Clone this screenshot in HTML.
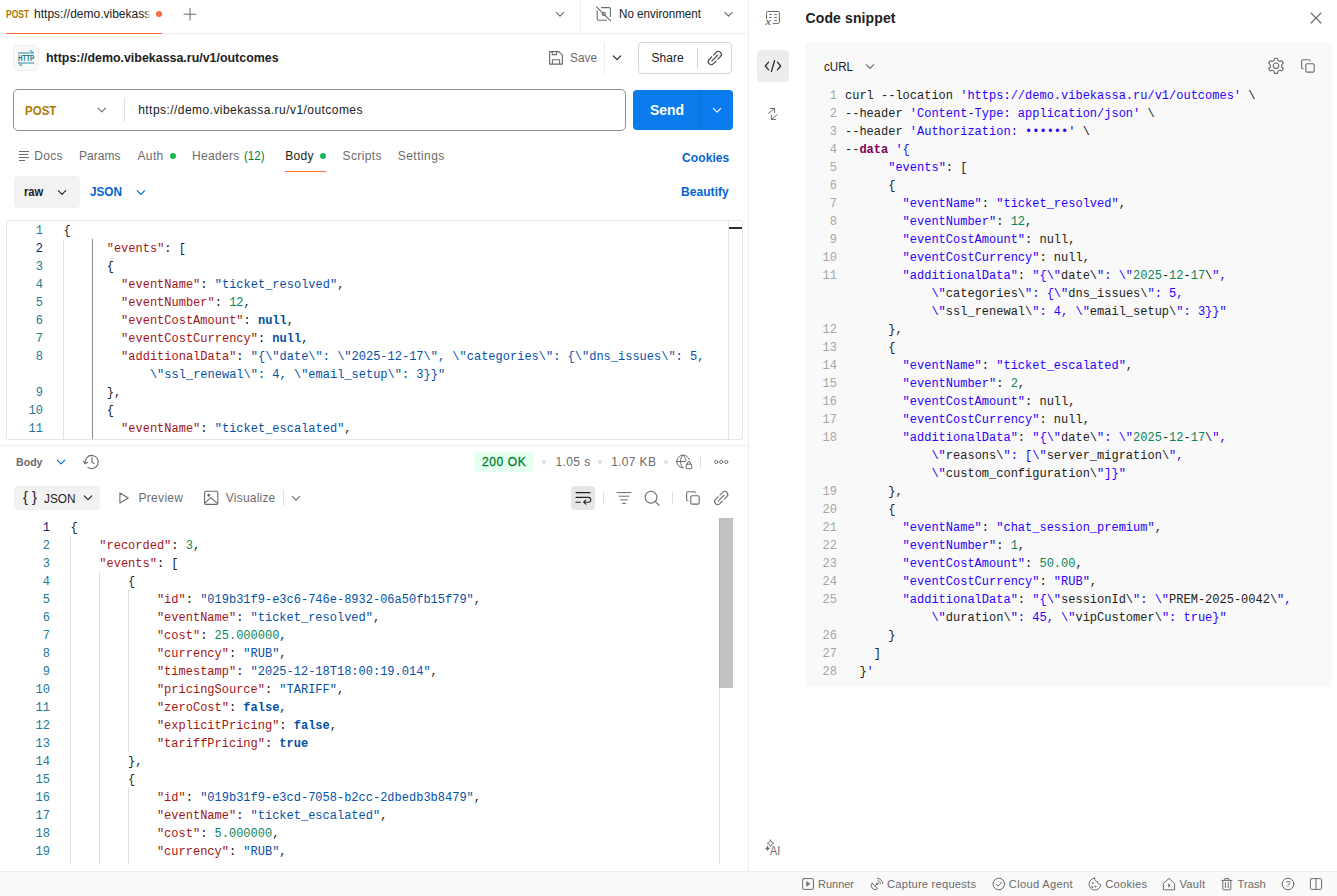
<!DOCTYPE html>
<html lang="en"><head><meta charset="utf-8"><title>Postman - Code snippet</title>
<style>
html,body{margin:0;padding:0}
body{width:1337px;height:896px;position:relative;overflow:hidden;background:#fff;font-family:"Liberation Sans",sans-serif;color:#212121}
.t{position:absolute;line-height:16px;white-space:pre;transform-origin:0 50%}
.x{position:absolute}
.code{position:absolute;left:0;font:12px/18px "Liberation Mono",monospace;color:#212121}
.ln{height:18px;position:relative}
.no,.tx{position:absolute;top:0;white-space:pre}
.no{text-align:right;left:0}
.req{top:222px}.req .no{width:43px;color:#237893}.req .tx{left:63.5px}
.resp{top:519px}.resp .no{width:50px;color:#237893}.resp .tx{left:70.5px}
.req .no.a,.resp .no.a{color:#0b216f}
.snip{top:87px}.snip .no{width:837px;color:#a6a6a6}.snip .tx{left:845px}
.k{color:#a31515}.s{color:#0451a5}.n{color:#098658}.w{color:#0451a5;font-weight:700}
.b{color:#2a00ff}.g{color:#098658}.d{color:#7f0055;font-weight:700}
svg{position:absolute;left:0;top:0;overflow:visible}
.st{fill:none;stroke-linecap:round;stroke-linejoin:round}
</style></head><body>
<div class="x" style="left:0px;top:33px;width:748px;height:1px;background:#ededed;"></div>
<div class="x" style="left:6px;top:32.5px;width:156px;height:1.6px;background:#ff6c37;"></div>
<div class="x" style="left:580px;top:0px;width:1px;height:33px;background:#ededed;"></div>
<div class="x" style="left:748px;top:0px;width:1px;height:872px;background:#ededed;"></div>
<div class="x" style="left:0px;top:445px;width:748px;height:1px;background:#ededed;"></div>
<div class="x" style="left:0px;top:871px;width:1337px;height:25px;background:#f9f9f9;border-top:1px solid #ededed;box-sizing:border-box;"></div>
<div class="x" style="left:145px;top:4px;width:7px;height:22px;background:linear-gradient(90deg,rgba(255,255,255,0),#fff 85%);z-index:2"></div>
<div class="x" style="left:155.9px;top:11.2px;width:6px;height:6px;background:#ff6c37;border-radius:3px;"></div>
<div class="x" style="left:13px;top:45px;width:26px;height:26px;background:#f9f9f9;border:1px solid #ededed;box-sizing:border-box;border-radius:5px;"></div>
<div class="x" style="left:604px;top:42px;width:1px;height:32px;background:#ededed;"></div>
<div class="x" style="left:638px;top:42px;width:94px;height:32px;border:1px solid #d4d4d4;box-sizing:border-box;border-radius:4px;"></div>
<div class="x" style="left:697px;top:48px;width:1px;height:20px;background:#d4d4d4;"></div>
<div class="x" style="left:13px;top:89px;width:613px;height:42px;background:#fff;border:1px solid #8f8f8f;box-sizing:border-box;border-radius:5px;"></div>
<div class="x" style="left:124px;top:98px;width:1px;height:24px;background:#e0e0e0;"></div>
<div class="x" style="left:633px;top:90px;width:100px;height:40px;background:#097bed;border-radius:4px;"></div>
<div class="x" style="left:700px;top:90px;width:1px;height:40px;background:#0970d8;"></div>
<div class="x" style="left:285.3px;top:170.6px;width:40.7px;height:1.5px;background:#ff6c37;"></div>
<div class="x" style="left:169.8px;top:153px;width:6px;height:6px;background:#1cb854;border-radius:3px;"></div>
<div class="x" style="left:320px;top:153px;width:6px;height:6px;background:#1cb854;border-radius:3px;"></div>
<div class="x" style="left:14px;top:176px;width:66px;height:32px;background:#f2f2f2;border-radius:4px;"></div>
<div class="x" style="left:6px;top:220px;width:736.5px;height:220px;border:1px solid #e6e6e6;box-sizing:border-box;border-radius:3px;"></div>
<div class="x" style="left:728px;top:221px;width:1px;height:218px;background:#e6e6e6;"></div>
<div class="x" style="left:729px;top:226.5px;width:13px;height:2.5px;background:#303030;"></div>
<div class="x" style="left:63px;top:239px;width:1px;height:200px;background:#e3e3e3;"></div>
<div class="x" style="left:92px;top:239px;width:1px;height:200px;background:#8a8a8a;"></div>
<div class="x" style="left:474px;top:452px;width:60px;height:20px;background:#e5fff1;border-radius:4px;"></div>
<div class="x" style="left:542px;top:460px;width:4px;height:4px;background:#dfdfdf;border-radius:2px;"></div>
<div class="x" style="left:598.3px;top:460px;width:4px;height:4px;background:#dfdfdf;border-radius:2px;"></div>
<div class="x" style="left:664px;top:460px;width:4px;height:4px;background:#dfdfdf;border-radius:2px;"></div>
<div class="x" style="left:700px;top:456px;width:1px;height:12px;background:#e0e0e0;"></div>
<div class="x" style="left:14px;top:486px;width:86px;height:24px;background:#f2f2f2;border-radius:4px;"></div>
<div class="x" style="left:283px;top:490px;width:1px;height:16px;background:#e0e0e0;"></div>
<div class="x" style="left:571px;top:486px;width:24px;height:24px;background:#e6e6e6;border-radius:4px;"></div>
<div class="x" style="left:603px;top:492px;width:1px;height:12px;background:#e0e0e0;"></div>
<div class="x" style="left:672px;top:492px;width:1px;height:12px;background:#e0e0e0;"></div>
<div class="x" style="left:70px;top:536px;width:1px;height:328px;background:#dcdcdc;"></div>
<div class="x" style="left:99px;top:572px;width:1px;height:292px;background:#dcdcdc;"></div>
<div class="x" style="left:128px;top:590px;width:1px;height:162px;background:#dcdcdc;"></div>
<div class="x" style="left:128px;top:788px;width:1px;height:76px;background:#dcdcdc;"></div>
<div class="x" style="left:719px;top:518px;width:1px;height:346px;background:#dedede;"></div>
<div class="x" style="left:719px;top:518px;width:1px;height:170px;background:#b2b2b2;"></div>
<div class="x" style="left:720px;top:518px;width:13px;height:170px;background:#c1c1c1;"></div>
<div class="x" style="left:757px;top:50px;width:32px;height:32px;background:#ededed;border-radius:4px;"></div>
<div class="x" style="left:805px;top:42px;width:527px;height:645px;background:#f9f9f9;border-radius:4px;"></div>
<svg width="1337" height="896" viewBox="0 0 1337 896">
<g transform="translate(190 14.2)" stroke="#6b6b6b" stroke-width="1.0" class="st" ><path d="M-6 0H6M0 -6V6"/></g>
<g class="st" stroke="#6db3bf" stroke-width="1.7" style="stroke-linecap:butt"><path d="M18 53H34M30.2 50.2L33.6 53.2"/><path d="M18 63H34M18.4 62.8L21.8 65.8"/></g>
<text x="17.9" y="60.9" font-family="Liberation Sans, sans-serif" font-weight="700" font-size="9" fill="#0f7d8c" textLength="16.4" lengthAdjust="spacingAndGlyphs">HTTP</text>
<g transform="translate(560 14.2)" stroke="#6b6b6b" stroke-width="1.1" class="st" ><path d="M-3.7 -1.9L0 1.9L3.7 -1.9"/></g>
<g transform="translate(728.5 14.2)" stroke="#6b6b6b" stroke-width="1.1" class="st" ><path d="M-3.7 -1.9L0 1.9L3.7 -1.9"/></g>
<g transform="translate(617 57.8)" stroke="#212121" stroke-width="1.1" class="st" ><path d="M-3.7 -1.9L0 1.9L3.7 -1.9"/></g>
<g transform="translate(101.8 110)" stroke="#6b6b6b" stroke-width="1.1" class="st" ><path d="M-3.7 -1.9L0 1.9L3.7 -1.9"/></g>
<g transform="translate(717 110.2)" stroke="#fff" stroke-width="1.1" class="st" ><path d="M-3.7 -1.9L0 1.9L3.7 -1.9"/></g>
<g transform="translate(62 192.5)" stroke="#212121" stroke-width="1.1" class="st" ><path d="M-3.7 -1.9L0 1.9L3.7 -1.9"/></g>
<g transform="translate(140.9 192.5)" stroke="#0265d2" stroke-width="1.1" class="st" ><path d="M-3.7 -1.9L0 1.9L3.7 -1.9"/></g>
<g transform="translate(61 462)" stroke="#0265d2" stroke-width="1.1" class="st" ><path d="M-3.7 -1.9L0 1.9L3.7 -1.9"/></g>
<g transform="translate(88 497.8)" stroke="#212121" stroke-width="1.1" class="st" ><path d="M-3.7 -1.9L0 1.9L3.7 -1.9"/></g>
<g transform="translate(296 498.2)" stroke="#6b6b6b" stroke-width="1.1" class="st" ><path d="M-3.7 -1.9L0 1.9L3.7 -1.9"/></g>
<g transform="translate(870 66.5)" stroke="#6b6b6b" stroke-width="1.1" class="st" ><path d="M-3.7 -1.9L0 1.9L3.7 -1.9"/></g>
<g transform="translate(0 0)" stroke="#6b6b6b" stroke-width="1.1" class="st" ><path d="M601.5 7.6H609.2Q610.4 7.6 610.4 8.8V16.5M606.5 20.2H598.4Q597.2 20.2 597.2 19V10.8"/><circle cx="603.8" cy="13.9" r="1.6"/><path d="M596.6 6.8L610.6 20.8"/></g>
<g transform="translate(0 0)" stroke="#6b6b6b" stroke-width="1.1" class="st" ><path d="M549.6 51.6H558.8L562.4 55.2V64.1H549.6Z"/><path d="M552.2 51.8V54.6H556.6V51.8"/><path d="M552.4 64V59.8H559.6V64"/></g>
<g transform="translate(714.8 58)" stroke="#3a3a3a" stroke-width="1.1" class="st" ><g transform="rotate(-45)"><path d="M1.3 -3H5A3 3 0 0 1 5 3H1.3M-1.3 -3H-5A3 3 0 0 0 -5 3H-1.3M-4.1 0H4.1"/></g></g>
<g transform="translate(721.2 498)" stroke="#6b6b6b" stroke-width="1.1" class="st" ><g transform="rotate(-45)"><path d="M1.3 -3H5A3 3 0 0 1 5 3H1.3M-1.3 -3H-5A3 3 0 0 0 -5 3H-1.3M-4.1 0H4.1"/></g></g>
<path d="M19 151.5H29M19 154.5H28M19 157.5H29M19 160.5H25" stroke="#6b6b6b" stroke-width="1" fill="none"/>
<g transform="translate(0 0)" stroke="#6b6b6b" stroke-width="1.1" class="st" ><path d="M85.2 463.1A6.6 6.6 0 1 1 87.9 467.4"/><path d="M83.4 461.2L85 463.7L87.7 462.3"/><path d="M91.9 457.4V462L94.2 463.6"/></g>
<g transform="translate(0 0)" stroke="#6b6b6b" stroke-width="1.1" class="st" ><path d="M119.9 493V503L128.2 498Z"/></g>
<g transform="translate(0 0)" stroke="#6b6b6b" stroke-width="1.1" class="st" ><rect x="204.6" y="491.2" width="13.2" height="13.2" rx="1.4"/><circle cx="208.8" cy="495.3" r="0.9" fill="#6b6b6b"/><path d="M204.8 503.2L210.8 497.6L217.6 503.6"/></g>
<g transform="translate(0 0)" stroke="#6b6b6b" stroke-width="1.0" class="st" ><path d="M689.3 459.6A6.4 6.4 0 1 0 683 467.9"/><path d="M683 455.1C679.6 458.4 679.6 464.6 683 467.9M683 455.1C685 457 685.9 459 686.1 461M676.8 461.5H685"/><rect x="686.2" y="464.2" width="5.6" height="4.6" rx="0.8" fill="#fff"/><path d="M687.6 464V462.9A1.4 1.4 0 0 1 690.4 462.9V464"/></g>
<g transform="translate(0 0)" stroke="#6b6b6b" stroke-width="0.9" class="st" ><circle cx="716.2" cy="462" r="1.6"/><circle cx="721.2" cy="462" r="1.6"/><circle cx="726.2" cy="462" r="1.6"/></g>
<g transform="translate(0 0)" stroke="#212121" stroke-width="1.1" class="st" ><path d="M576 492.6H590M576 497.4H588.4A2.4 2.4 0 0 1 588.4 502.2H584M585.8 500.2L583.6 502.2L585.8 504.2M576 502.2H580.4"/></g>
<g transform="translate(0 0)" stroke="#6b6b6b" stroke-width="1.0" class="st" ><path d="M617 492.6H631M619.2 496.2H628.8M620.8 499.8H627.2M622.4 503.4H625.6"/></g>
<g transform="translate(0 0)" stroke="#6b6b6b" stroke-width="1.1" class="st" ><circle cx="651" cy="497.2" r="5.9"/><path d="M655.4 501.6L659.2 505.4"/></g>
<g transform="translate(693 498)" stroke="#6b6b6b" stroke-width="1.1" class="st" ><rect x="-2.2" y="-2.3" width="8.4" height="8.4" rx="1.4"/><path d="M-5 2.6Q-6.4 2.6 -6.4 1.2V-4.8Q-6.4 -6.2 -5 -6.2H0.9Q2.3 -6.2 2.3 -5.2"/></g>
<g transform="translate(1308 66)" stroke="#6b6b6b" stroke-width="1.1" class="st" ><rect x="-2.2" y="-2.3" width="8.4" height="8.4" rx="1.4"/><path d="M-5 2.6Q-6.4 2.6 -6.4 1.2V-4.8Q-6.4 -6.2 -5 -6.2H0.9Q2.3 -6.2 2.3 -5.2"/></g>
<g transform="translate(0 0)" stroke="#6b6b6b" stroke-width="1.0" class="st" ><path d="M766.5 18.6V12.7Q766.5 11.5 767.7 11.5H778.2Q779.4 11.5 779.4 12.7V22.2Q779.4 23.4 778.2 23.4H773.2"/><path d="M769.2 14.5H771.7M774.2 14.5H776.9M769.2 17.5H771.7M774.2 17.5H776.9M774.2 20.5H776.9" style="stroke-linecap:butt"/></g>
<text x="765.6" y="25" font-family="Liberation Serif, serif" font-style="italic" font-weight="700" font-size="11" fill="#6b6b6b">x</text>
<g transform="translate(773 66)" stroke="#212121" stroke-width="1.2" class="st" ><path d="M-4.4 -3.8L-7.7 0L-4.4 3.8M4.4 -3.8L7.7 0L4.4 3.8M1.6 -5.5L-1.6 5.5"/></g>
<g transform="translate(0 0)" stroke="#6b6b6b" stroke-width="1.0" class="st" ><path d="M768.6 113.4L774.4 108.6M770.2 108.5H774.6V112.6M777.2 114.6L771.6 119.3M771.4 115.4V119.4H775.8"/></g>
<g transform="translate(770.5 843.4)" stroke="#6b6b6b" stroke-width="0.9" class="st" ><path d="M0 -3.3Q0.5 -0.5 3.3 0Q0.5 0.5 0 3.3Q-0.5 0.5 -3.3 0Q-0.5 -0.5 0 -3.3Z"/></g>
<g transform="translate(767.5 848.4)" stroke="#6b6b6b" stroke-width="0.5" class="st" ><path d="M0 -2.2Q0.3 -0.3 2.2 0Q0.3 0.3 0 2.2Q-0.3 0.3 -2.2 0Q-0.3 -0.3 0 -2.2Z" fill="#6b6b6b"/></g>
<g transform="translate(1316 18)" stroke="#6b6b6b" stroke-width="1.1" class="st" ><path d="M-5 -5L5 5M5 -5L-5 5"/></g>
<g transform="translate(1276 65.8)" stroke="#6b6b6b" stroke-width="1.1" class="st" ><path d="M-1.53 -7.55L1.53 -7.55L2.01 -5.33L3.62 -4.41L5.77 -5.10L7.30 -2.45L5.62 -0.93L5.62 0.93L7.30 2.45L5.77 5.10L3.62 4.41L2.01 5.33L1.53 7.55L-1.53 7.55L-2.01 5.33L-3.62 4.41L-5.77 5.10L-7.30 2.45L-5.62 0.93L-5.62 -0.93L-7.30 -2.45L-5.77 -5.10L-3.62 -4.41L-2.01 -5.33Z"/><circle r="2.8"/></g>
<g transform="translate(0 0)" stroke="#6b6b6b" stroke-width="1.0" class="st" ><rect x="802.6" y="878.6" width="10.8" height="10.8" rx="1.4"/><path d="M806.6 881.8V886.2L809.8 884Z" fill="#6b6b6b" stroke-width="0.6"/></g>
<g transform="translate(0 0)" stroke="#6b6b6b" stroke-width="1.0" class="st" ><path d="M872.1 883.2L877.8 888.5A3.9 3.9 0 0 1 872.1 883.2Z"/><path d="M875 885.9L877 883.9"/><circle cx="877.1" cy="883.8" r="0.7" fill="#6b6b6b"/><path d="M878 880.7A3.3 3.3 0 0 1 880.5 883.5M877.4 878.3A5.6 5.6 0 0 1 882.8 883.5"/></g>
<g transform="translate(0 0)" stroke="#6b6b6b" stroke-width="1.0" class="st" ><circle cx="998.8" cy="884" r="5.8"/><path d="M996.2 884.2L998.2 886.2L1001.6 882.2"/></g>
<g transform="translate(0 0)" stroke="#6b6b6b" stroke-width="1.0" class="st" ><path d="M1094.6 878.2A5.9 5.9 0 1 0 1100.8 884.6A2.6 2.6 0 0 1 1097.8 881.6A2.8 2.8 0 0 1 1094.6 878.2Z"/><circle cx="1092.6" cy="883" r="0.5"/><circle cx="1095.4" cy="886.6" r="0.5"/><circle cx="1092.2" cy="887" r="0.5"/></g>
<g transform="translate(0 0)" stroke="#6b6b6b" stroke-width="1.0" class="st" ><path d="M1163.4 889.4V883.4L1169 878.4L1174.6 883.4V889.4Z"/><path d="M1169 884.4V886.6" stroke-width="1.6"/></g>
<g transform="translate(0 0)" stroke="#6b6b6b" stroke-width="1.0" class="st" ><path d="M1221.6 880.4H1232M1224.8 880.2V878.6H1228.8V880.2M1222.8 880.6V889Q1222.8 889.8 1223.6 889.8H1230Q1230.8 889.8 1230.8 889V880.6M1225.4 882.6V887.6M1228.2 882.6V887.6"/></g>
<g transform="translate(0 0)" stroke="#6b6b6b" stroke-width="1.0" class="st" ><circle cx="1288" cy="884" r="5.8"/></g>
<text x="1285.4" y="887.4" font-family="Liberation Sans, sans-serif" font-size="9" fill="#6b6b6b">?</text>
<g transform="translate(0 0)" stroke="#6b6b6b" stroke-width="1.0" class="st" ><rect x="1310.4" y="878.6" width="11.2" height="10.8" rx="1.2"/><path d="M1316 878.8V889.2"/></g>
</svg>
<span class="t" id="t0" style="left:6.0px;top:6.3px;font-size:10.5px;color:#ad7a03;font-weight:700;transform:scaleX(0.8114);">POST</span>
<span class="t" id="t1" style="left:34.1px;top:6.3px;font-size:12px;color:#212121;letter-spacing:0.002px;">https://demo.vibekass</span>
<span class="t" id="t2" style="left:619.3px;top:6.3px;font-size:12px;color:#212121;transform:scaleX(0.9679);">No environment</span>
<span class="t" id="t3" style="left:46.4px;top:49.7px;font-size:12.5px;color:#212121;font-weight:700;transform:scaleX(0.9936);">https://demo.vibekassa.ru/v1/outcomes</span>
<span class="t" id="t4" style="left:569.8px;top:50.1px;font-size:12px;color:#6b6b6b;transform:scaleX(0.9905);">Save</span>
<span class="t" id="t5" style="left:651.5px;top:50.1px;font-size:12px;color:#212121;letter-spacing:0.042px;">Share</span>
<span class="t" id="t6" style="left:25.1px;top:102.9px;font-size:12px;color:#ad7a03;font-weight:700;transform:scaleX(0.9611);">POST</span>
<span class="t" id="t7" style="left:138.2px;top:101.9px;font-size:12px;color:#212121;letter-spacing:0.450px;">https://demo.vibekassa.ru/v1/outcomes</span>
<span class="t" id="t8" style="left:649.6px;top:102.0px;font-size:14px;color:#ffffff;font-weight:700;transform:scaleX(0.9961);">Send</span>
<span class="t" id="t9" style="left:34.2px;top:147.9px;font-size:12px;color:#6b6b6b;letter-spacing:0.319px;">Docs</span>
<span class="t" id="t10" style="left:79.0px;top:147.9px;font-size:12px;color:#6b6b6b;letter-spacing:0.051px;">Params</span>
<span class="t" id="t11" style="left:137.4px;top:147.9px;font-size:12px;color:#6b6b6b;letter-spacing:0.404px;">Auth</span>
<span class="t" id="t12" style="left:192.1px;top:147.9px;font-size:12px;color:#6b6b6b;letter-spacing:0.307px;">Headers</span>
<span class="t" id="t13" style="left:244.3px;top:147.9px;font-size:12px;color:#007f31;transform:scaleX(0.9605);">(12)</span>
<span class="t" id="t14" style="left:285.3px;top:147.9px;font-size:12px;color:#212121;letter-spacing:0.247px;">Body</span>
<span class="t" id="t15" style="left:342.5px;top:147.9px;font-size:12px;color:#6b6b6b;letter-spacing:0.385px;">Scripts</span>
<span class="t" id="t16" style="left:397.8px;top:147.9px;font-size:12px;color:#6b6b6b;letter-spacing:0.449px;">Settings</span>
<span class="t" id="t17" style="left:682.1px;top:149.6px;font-size:12px;color:#0265d2;font-weight:700;letter-spacing:0.085px;">Cookies</span>
<span class="t" id="t18" style="left:23.9px;top:184.1px;font-size:12px;color:#212121;font-weight:700;transform:scaleX(0.9329);">raw</span>
<span class="t" id="t19" style="left:90.0px;top:184.1px;font-size:12px;color:#0265d2;font-weight:700;transform:scaleX(0.9790);">JSON</span>
<span class="t" id="t20" style="left:681.0px;top:183.6px;font-size:12px;color:#0265d2;font-weight:700;letter-spacing:0.065px;">Beautify</span>
<span class="t" id="t21" style="left:16.2px;top:454.1px;font-size:11.2px;color:#6b6b6b;font-weight:700;transform:scaleX(0.9475);">Body</span>
<span class="t" id="t22" style="left:482.1px;top:454.1px;font-size:12px;color:#007f31;letter-spacing:0.579px;-webkit-text-stroke:0.3px #007f31;">200 OK</span>
<span class="t" id="t23" style="left:555.4px;top:454.1px;font-size:12px;color:#6b6b6b;letter-spacing:0.419px;">1.05 s</span>
<span class="t" id="t24" style="left:611.2px;top:454.1px;font-size:12px;color:#6b6b6b;letter-spacing:0.333px;">1.07 KB</span>
<span class="t" id="t25" style="left:23.2px;top:489.2px;font-size:15px;color:#212121;transform:scaleX(0.9868);">{ }</span>
<span class="t" id="t26" style="left:44.4px;top:491.0px;font-size:12px;color:#212121;transform:scaleX(0.9839);">JSON</span>
<span class="t" id="t27" style="left:138.5px;top:490.1px;font-size:12px;color:#6b6b6b;letter-spacing:0.302px;">Preview</span>
<span class="t" id="t28" style="left:225.8px;top:490.1px;font-size:12px;color:#6b6b6b;letter-spacing:0.211px;">Visualize</span>
<span class="t" id="t29" style="left:805.5px;top:10.2px;font-size:14px;color:#212121;font-weight:700;letter-spacing:0.121px;">Code snippet</span>
<span class="t" id="t30" style="left:824.3px;top:59.1px;font-size:12px;color:#212121;transform:scaleX(0.9695);">cURL</span>
<span class="t" id="t31" style="left:769.9px;top:842.6px;font-size:12px;color:#6b6b6b;transform:scaleX(0.8992);">AI</span>
<span class="t" id="t32" style="left:818.3px;top:876.1px;font-size:11.2px;color:#6b6b6b;transform:scaleX(0.9808);">Runner</span>
<span class="t" id="t33" style="left:887.0px;top:876.1px;font-size:11.2px;color:#6b6b6b;letter-spacing:0.211px;">Capture requests</span>
<span class="t" id="t34" style="left:1008.8px;top:876.1px;font-size:11.2px;color:#6b6b6b;letter-spacing:0.293px;">Cloud Agent</span>
<span class="t" id="t35" style="left:1105.2px;top:876.1px;font-size:11.2px;color:#6b6b6b;letter-spacing:0.230px;">Cookies</span>
<span class="t" id="t36" style="left:1179.5px;top:876.1px;font-size:11.2px;color:#6b6b6b;letter-spacing:0.207px;">Vault</span>
<span class="t" id="t37" style="left:1237.5px;top:876.1px;font-size:11.2px;color:#6b6b6b;letter-spacing:0.028px;">Trash</span><div class="code req">
<div class="ln"><span class="no">1</span><span class="tx">{</span></div>
<div class="ln"><span class="no a">2</span><span class="tx">      <span class="k">"events"</span>: [</span></div>
<div class="ln"><span class="no">3</span><span class="tx">      {</span></div>
<div class="ln"><span class="no">4</span><span class="tx">        <span class="k">"eventName"</span>: <span class="s">"ticket_resolved"</span>,</span></div>
<div class="ln"><span class="no">5</span><span class="tx">        <span class="k">"eventNumber"</span>: <span class="n">12</span>,</span></div>
<div class="ln"><span class="no">6</span><span class="tx">        <span class="k">"eventCostAmount"</span>: <span class="w">null</span>,</span></div>
<div class="ln"><span class="no">7</span><span class="tx">        <span class="k">"eventCostCurrency"</span>: <span class="w">null</span>,</span></div>
<div class="ln"><span class="no">8</span><span class="tx">        <span class="k">"additionalData"</span>: <span class="s">"{\"date\": \"2025-12-17\", \"categories\": {\"dns_issues\": 5,</span></span></div>
<div class="ln"><span class="no"></span><span class="tx">            <span class="s">\"ssl_renewal\": 4, \"email_setup\": 3}}"</span></span></div>
<div class="ln"><span class="no">9</span><span class="tx">      },</span></div>
<div class="ln"><span class="no">10</span><span class="tx">      {</span></div>
<div class="ln"><span class="no">11</span><span class="tx">        <span class="k">"eventName"</span>: <span class="s">"ticket_escalated"</span>,</span></div>
</div><div class="code resp">
<div class="ln"><span class="no a">1</span><span class="tx">{</span></div>
<div class="ln"><span class="no">2</span><span class="tx">    <span class="k">"recorded"</span>: <span class="n">3</span>,</span></div>
<div class="ln"><span class="no">3</span><span class="tx">    <span class="k">"events"</span>: [</span></div>
<div class="ln"><span class="no">4</span><span class="tx">        {</span></div>
<div class="ln"><span class="no">5</span><span class="tx">            <span class="k">"id"</span>: <span class="s">"019b31f9-e3c6-746e-8932-06a50fb15f79"</span>,</span></div>
<div class="ln"><span class="no">6</span><span class="tx">            <span class="k">"eventName"</span>: <span class="s">"ticket_resolved"</span>,</span></div>
<div class="ln"><span class="no">7</span><span class="tx">            <span class="k">"cost"</span>: <span class="n">25.000000</span>,</span></div>
<div class="ln"><span class="no">8</span><span class="tx">            <span class="k">"currency"</span>: <span class="s">"RUB"</span>,</span></div>
<div class="ln"><span class="no">9</span><span class="tx">            <span class="k">"timestamp"</span>: <span class="s">"2025-12-18T18:00:19.014"</span>,</span></div>
<div class="ln"><span class="no">10</span><span class="tx">            <span class="k">"pricingSource"</span>: <span class="s">"TARIFF"</span>,</span></div>
<div class="ln"><span class="no">11</span><span class="tx">            <span class="k">"zeroCost"</span>: <span class="w">false</span>,</span></div>
<div class="ln"><span class="no">12</span><span class="tx">            <span class="k">"explicitPricing"</span>: <span class="w">false</span>,</span></div>
<div class="ln"><span class="no">13</span><span class="tx">            <span class="k">"tariffPricing"</span>: <span class="w">true</span></span></div>
<div class="ln"><span class="no">14</span><span class="tx">        },</span></div>
<div class="ln"><span class="no">15</span><span class="tx">        {</span></div>
<div class="ln"><span class="no">16</span><span class="tx">            <span class="k">"id"</span>: <span class="s">"019b31f9-e3cd-7058-b2cc-2dbedb3b8479"</span>,</span></div>
<div class="ln"><span class="no">17</span><span class="tx">            <span class="k">"eventName"</span>: <span class="s">"ticket_escalated"</span>,</span></div>
<div class="ln"><span class="no">18</span><span class="tx">            <span class="k">"cost"</span>: <span class="n">5.000000</span>,</span></div>
<div class="ln"><span class="no">19</span><span class="tx">            <span class="k">"currency"</span>: <span class="s">"RUB"</span>,</span></div>
</div><div class="code snip">
<div class="ln"><span class="no">1</span><span class="tx">curl --location <span class="b">'https://demo.vibekassa.ru/v1/outcomes'</span> \</span></div>
<div class="ln"><span class="no">2</span><span class="tx">--header <span class="b">'Content-Type: application/json'</span> \</span></div>
<div class="ln"><span class="no">3</span><span class="tx">--header <span class="b">'Authorization: ••••••'</span> \</span></div>
<div class="ln"><span class="no">4</span><span class="tx">--<span class="d">data</span> <span class="b">'{</span></span></div>
<div class="ln"><span class="no">5</span><span class="tx">      <span class="b">"events"</span>: [</span></div>
<div class="ln"><span class="no">6</span><span class="tx">      {</span></div>
<div class="ln"><span class="no">7</span><span class="tx">        <span class="b">"eventName"</span>: <span class="b">"ticket_resolved"</span>,</span></div>
<div class="ln"><span class="no">8</span><span class="tx">        <span class="b">"eventNumber"</span>: <span class="g">12</span>,</span></div>
<div class="ln"><span class="no">9</span><span class="tx">        <span class="b">"eventCostAmount"</span>: null,</span></div>
<div class="ln"><span class="no">10</span><span class="tx">        <span class="b">"eventCostCurrency"</span>: null,</span></div>
<div class="ln"><span class="no">11</span><span class="tx">        <span class="b">"additionalData"</span>: <span class="b">"{\"</span>date\<span class="b">": \"</span><span class="g">2025</span>-<span class="g">12</span>-<span class="g">17</span>\<span class="b">",</span></span></div>
<div class="ln"><span class="no"></span><span class="tx">            <span class="b">\"</span>categories\<span class="b">": {\"</span>dns_issues\<span class="b">": 5,</span></span></div>
<div class="ln"><span class="no"></span><span class="tx">            <span class="b">\"</span>ssl_renewal\<span class="b">": 4, \"</span>email_setup\<span class="b">": 3}}"</span></span></div>
<div class="ln"><span class="no">12</span><span class="tx">      },</span></div>
<div class="ln"><span class="no">13</span><span class="tx">      {</span></div>
<div class="ln"><span class="no">14</span><span class="tx">        <span class="b">"eventName"</span>: <span class="b">"ticket_escalated"</span>,</span></div>
<div class="ln"><span class="no">15</span><span class="tx">        <span class="b">"eventNumber"</span>: <span class="g">2</span>,</span></div>
<div class="ln"><span class="no">16</span><span class="tx">        <span class="b">"eventCostAmount"</span>: null,</span></div>
<div class="ln"><span class="no">17</span><span class="tx">        <span class="b">"eventCostCurrency"</span>: null,</span></div>
<div class="ln"><span class="no">18</span><span class="tx">        <span class="b">"additionalData"</span>: <span class="b">"{\"</span>date\<span class="b">": \"</span><span class="g">2025</span>-<span class="g">12</span>-<span class="g">17</span>\<span class="b">",</span></span></div>
<div class="ln"><span class="no"></span><span class="tx">            <span class="b">\"</span>reasons\<span class="b">": [\"</span>server_migration\<span class="b">",</span></span></div>
<div class="ln"><span class="no"></span><span class="tx">            <span class="b">\"</span>custom_configuration\<span class="b">"]}"</span></span></div>
<div class="ln"><span class="no">19</span><span class="tx">      },</span></div>
<div class="ln"><span class="no">20</span><span class="tx">      {</span></div>
<div class="ln"><span class="no">21</span><span class="tx">        <span class="b">"eventName"</span>: <span class="b">"chat_session_premium"</span>,</span></div>
<div class="ln"><span class="no">22</span><span class="tx">        <span class="b">"eventNumber"</span>: <span class="g">1</span>,</span></div>
<div class="ln"><span class="no">23</span><span class="tx">        <span class="b">"eventCostAmount"</span>: <span class="g">50.00</span>,</span></div>
<div class="ln"><span class="no">24</span><span class="tx">        <span class="b">"eventCostCurrency"</span>: <span class="b">"RUB"</span>,</span></div>
<div class="ln"><span class="no">25</span><span class="tx">        <span class="b">"additionalData"</span>: <span class="b">"{\"</span>sessionId\<span class="b">": \"</span>PREM-2025-0042\<span class="b">",</span></span></div>
<div class="ln"><span class="no"></span><span class="tx">            <span class="b">\"</span>duration\<span class="b">": 45, \"</span>vipCustomer\<span class="b">": true}"</span></span></div>
<div class="ln"><span class="no">26</span><span class="tx">      }</span></div>
<div class="ln"><span class="no">27</span><span class="tx">    ]</span></div>
<div class="ln"><span class="no">28</span><span class="tx">  }<span class="b">'</span></span></div>
</div>
</body></html>
